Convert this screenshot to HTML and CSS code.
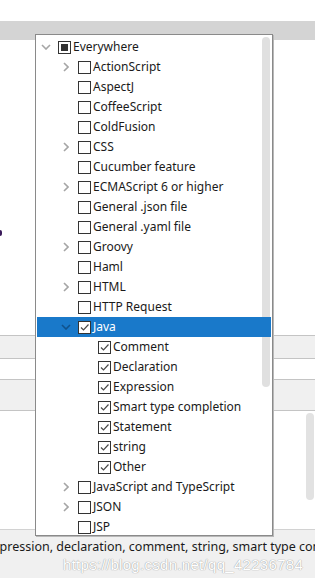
FILE: index.html
```html
<!DOCTYPE html>
<html lang="en">
<head>
    <meta charset="UTF-8">
    <title>Postfix completion - scope</title>
    <link rel="stylesheet" href="styles.css">
</head>
<body>
    <!-- Background dialog -->
    <div class="page">
        <div class="top-gap"></div>
        <div class="tab-bar"></div>
        <div class="area area-upper"><span class="cut-char"></span></div>
        <div class="band band-gray"></div>
        <div class="band band-white"></div>
        <div class="band band-gray tall"></div>
        <div class="area area-lower"><span class="page-thumb"></span></div>
        <div class="footer">
            <p class="desc"><span class="desc-text">Expression, declaration, comment, string, smart type completion</span></p>
            <p class="watermark">https://blog.csdn.net/qq_42236784</p>
        </div>
    </div>

    <!-- Scope popup -->
    <div class="popup">
        <span class="thumb"></span>
        <ul class="tree">
            <li class="row lvl0"><span class="arrow"><svg width="10" height="6" viewBox="0 0 10 6"><path d="M1 1 L5 5 L9 1" /></svg></span><span class="box mixed"></span><span class="label">Everywhere</span></li>
            <li class="row lvl1"><span class="arrow"><svg width="6" height="10" viewBox="0 0 6 10"><path d="M1 1 L5 5 L1 9" /></svg></span><span class="box"></span><span class="label">ActionScript</span></li>
            <li class="row lvl1"><span class="arrow"></span><span class="box"></span><span class="label">AspectJ</span></li>
            <li class="row lvl1"><span class="arrow"></span><span class="box"></span><span class="label">CoffeeScript</span></li>
            <li class="row lvl1"><span class="arrow"></span><span class="box"></span><span class="label">ColdFusion</span></li>
            <li class="row lvl1"><span class="arrow"><svg width="6" height="10" viewBox="0 0 6 10"><path d="M1 1 L5 5 L1 9" /></svg></span><span class="box"></span><span class="label">CSS</span></li>
            <li class="row lvl1"><span class="arrow"></span><span class="box"></span><span class="label">Cucumber feature</span></li>
            <li class="row lvl1"><span class="arrow"><svg width="6" height="10" viewBox="0 0 6 10"><path d="M1 1 L5 5 L1 9" /></svg></span><span class="box"></span><span class="label">ECMAScript 6 or higher</span></li>
            <li class="row lvl1"><span class="arrow"></span><span class="box"></span><span class="label">General .json file</span></li>
            <li class="row lvl1"><span class="arrow"></span><span class="box"></span><span class="label">General .yaml file</span></li>
            <li class="row lvl1"><span class="arrow"><svg width="6" height="10" viewBox="0 0 6 10"><path d="M1 1 L5 5 L1 9" /></svg></span><span class="box"></span><span class="label">Groovy</span></li>
            <li class="row lvl1"><span class="arrow"></span><span class="box"></span><span class="label">Haml</span></li>
            <li class="row lvl1"><span class="arrow"><svg width="6" height="10" viewBox="0 0 6 10"><path d="M1 1 L5 5 L1 9" /></svg></span><span class="box"></span><span class="label">HTML</span></li>
            <li class="row lvl1"><span class="arrow"></span><span class="box"></span><span class="label">HTTP Request</span></li>
            <li class="row lvl1 selected"><span class="arrow"><svg width="10" height="6" viewBox="0 0 10 6"><path d="M1 1 L5 5 L9 1" /></svg></span><span class="box checked"><svg width="11" height="11" viewBox="0 0 11 11"><path d="M2 5.5 L4.5 8 L9.5 2.5" /></svg></span><span class="label">Java</span></li>
            <li class="row lvl2"><span class="box checked"><svg width="11" height="11" viewBox="0 0 11 11"><path d="M2 5.5 L4.5 8 L9.5 2.5" /></svg></span><span class="label">Comment</span></li>
            <li class="row lvl2"><span class="box checked"><svg width="11" height="11" viewBox="0 0 11 11"><path d="M2 5.5 L4.5 8 L9.5 2.5" /></svg></span><span class="label">Declaration</span></li>
            <li class="row lvl2"><span class="box checked"><svg width="11" height="11" viewBox="0 0 11 11"><path d="M2 5.5 L4.5 8 L9.5 2.5" /></svg></span><span class="label">Expression</span></li>
            <li class="row lvl2"><span class="box checked"><svg width="11" height="11" viewBox="0 0 11 11"><path d="M2 5.5 L4.5 8 L9.5 2.5" /></svg></span><span class="label">Smart type completion</span></li>
            <li class="row lvl2"><span class="box checked"><svg width="11" height="11" viewBox="0 0 11 11"><path d="M2 5.5 L4.5 8 L9.5 2.5" /></svg></span><span class="label">Statement</span></li>
            <li class="row lvl2"><span class="box checked"><svg width="11" height="11" viewBox="0 0 11 11"><path d="M2 5.5 L4.5 8 L9.5 2.5" /></svg></span><span class="label">string</span></li>
            <li class="row lvl2"><span class="box checked"><svg width="11" height="11" viewBox="0 0 11 11"><path d="M2 5.5 L4.5 8 L9.5 2.5" /></svg></span><span class="label">Other</span></li>
            <li class="row lvl1"><span class="arrow"><svg width="6" height="10" viewBox="0 0 6 10"><path d="M1 1 L5 5 L1 9" /></svg></span><span class="box"></span><span class="label">JavaScript and TypeScript</span></li>
            <li class="row lvl1"><span class="arrow"><svg width="6" height="10" viewBox="0 0 6 10"><path d="M1 1 L5 5 L1 9" /></svg></span><span class="box"></span><span class="label">JSON</span></li>
            <li class="row lvl1"><span class="arrow"></span><span class="box"></span><span class="label">JSP</span></li>
        </ul>
    </div>
</body>
</html>
```

FILE: styles.css
```css
/* General */
body {
    margin: 0;
    font-family: "Noto Sans", "Open Sans", sans-serif;
    font-size: 12px;
    color: #1a1a1a;
    background: #ffffff;
    overflow: hidden;
}

.page {
    height: 578px;
    display: flex;
    flex-direction: column;
}

/* Background dialog */
.top-gap {
    height: 21px;
}

.tab-bar {
    height: 19px;
    background: #d4d4d4;
}

.area-upper {
    height: 295px;
    position: relative;
}

.cut-char {
    position: absolute;
    left: 0;
    top: 190px;
    width: 2px;
    height: 6px;
    border-radius: 0 2px 2px 0;
    background: #3a1a5a;
}

.band {
    border-top: 1px solid #c4c4c4;
}

.band-gray {
    height: 22px;
    background: #f0f0f0;
}

.band-white {
    height: 20px;
}

.band-gray.tall {
    height: 30px;
    border-bottom: 1px solid #c4c4c4;
}

.area-lower {
    height: 118px;
    position: relative;
}

.page-thumb {
    position: absolute;
    right: 1px;
    top: 2px;
    width: 8px;
    height: 87px;
    border-radius: 4px;
    background: #e2e2e2;
}

.footer {
    flex: 1;
    background: #f0f0f0;
    border-top: 1px solid #d2d2d2;
    overflow: hidden;
    white-space: nowrap;
}

.desc {
    margin: 9px 0 0 0;
    font-size: 12.5px;
    line-height: 16px;
}

.desc-text {
    margin-left: -14px;
}

.watermark {
    margin: 1px 0 0 63px;
    font-family: "Liberation Sans", Arial, sans-serif;
    font-size: 15px;
    color: #ffffff;
    text-shadow: 0 0 1px #9a9a9a, 0 0 1px #b0b0b0;
    letter-spacing: 0.3px;
}

/* Scope popup */
.popup {
    position: absolute;
    left: 35px;
    top: 34px;
    width: 234px;
    height: 496px;
    padding: 2px 1px;
    background: #ffffff;
    border: 1px solid #8a8a8a;
    box-shadow: 1px 1px 0 #b8b8b8;
    overflow: hidden;
}

.thumb {
    position: absolute;
    left: 226px;
    top: 2px;
    width: 8px;
    height: 350px;
    border-radius: 4px;
    background: #e0e0e0;
}

.tree {
    list-style: none;
    margin: 0;
    padding: 0;
}

.row {
    height: 20px;
    display: flex;
    align-items: center;
    white-space: nowrap;
}

.lvl0 { padding-left: 1px; }
.lvl1 { padding-left: 21px; }
.lvl2 { padding-left: 61px; }

.selected {
    position: relative;
    background: #1979ca;
    color: #ffffff;
}

.arrow {
    width: 16px;
    height: 20px;
    margin-right: 4px;
    display: flex;
    align-items: center;
    justify-content: center;
}

.arrow svg {
    fill: none;
    stroke: #a6a6a6;
    stroke-width: 1.6;
}

.selected .arrow svg {
    stroke: #10528c;
}

.box {
    width: 11px;
    height: 11px;
    border: 1px solid #333333;
    background: #ffffff;
    margin-right: 2px;
    position: relative;
    flex-shrink: 0;
}

.box svg {
    display: block;
    fill: none;
    stroke: #4a4a4a;
    stroke-width: 1.2;
}

.box.mixed::after {
    content: "";
    position: absolute;
    left: 2px;
    top: 2px;
    width: 7px;
    height: 7px;
    background: #333333;
}

.label {
    line-height: 20px;
}
```
